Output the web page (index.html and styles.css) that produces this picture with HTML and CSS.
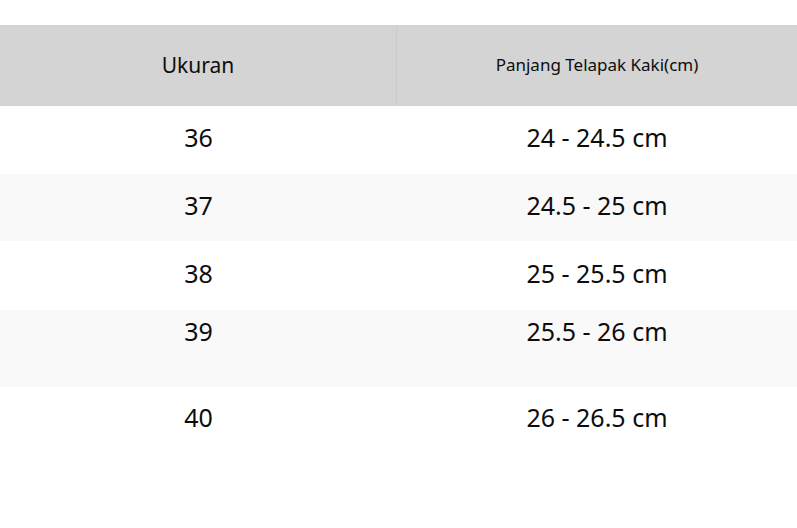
FILE: index.html
```html
<!DOCTYPE html>
<html lang="id">
<head>
<meta charset="utf-8">
<title>Ukuran</title>
<link rel="stylesheet" href="styles.css">
</head>
<body>
<div class="size-table">
  <div class="row head">
    <div class="cell first">Ukuran</div>
    <div class="cell second small">Panjang Telapak Kaki(cm)</div>
  </div>
  <div class="row r1">
    <div class="cell">36</div>
    <div class="cell">24 - 24.5 cm</div>
  </div>
  <div class="row r2 alt">
    <div class="cell">37</div>
    <div class="cell">24.5 - 25 cm</div>
  </div>
  <div class="row r3">
    <div class="cell">38</div>
    <div class="cell">25 - 25.5 cm</div>
  </div>
  <div class="row r4 alt">
    <div class="cell">39</div>
    <div class="cell">25.5 - 26 cm</div>
  </div>
  <div class="row r5">
    <div class="cell">40</div>
    <div class="cell">26 - 26.5 cm</div>
  </div>
</div>
</body>
</html>
```
FILE: styles.css
```css
html, body {
  margin: 0;
  padding: 0;
  background: #ffffff;
}
body {
  font-family: "Noto Sans", "Open Sans", sans-serif;
  color: #0d0d0d;
}
.size-table {
  margin-top: 25px;
  width: 797px;
}
.row {
  display: grid;
  grid-template-columns: 397px 400px;
  font-size: 25px;
  line-height: 34px;
}
.row .cell {
  text-align: center;
}
.row.alt {
  background: #f9f9f9;
}
.head {
  background: #d4d4d4;
  height: 81px;
  align-items: center;
  font-size: 21px;
  line-height: 28px;
}
.head .cell {
  height: 81px;
  display: flex;
  align-items: center;
  justify-content: center;
  padding-bottom: 2px;
  box-sizing: border-box;
}
.head .first {
  border-right: 1px solid #cbcbcb;
  box-sizing: border-box;
}
.head .small {
  font-size: 17px;
}
.r1 { padding: 14px 0 20px; }
.r2 { padding: 14px 0 19px; }
.r3 { padding: 15px 0 20px; }
.r4 { padding: 4px 0 39px; }
.r5 { padding: 13px 0 21px; }
```
